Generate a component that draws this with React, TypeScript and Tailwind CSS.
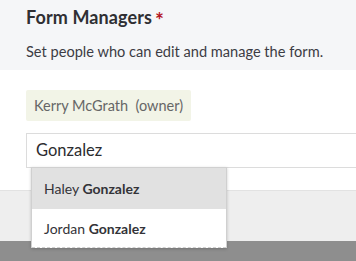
import React from "react";

export default function App() {
  return (
    <div className="w-[356px] h-[261px] overflow-hidden bg-white flex flex-col font-['Lato',sans-serif]">
      <div className="h-[70px] shrink-0 bg-[#f5f6f8] pl-[26px] pt-[5px]">
        <div className="flex items-start text-[18px] leading-[24px] font-bold text-[#2f2f33] tracking-[0.1px]">
          Form Managers
          <span className="ml-[3px] mt-[3px] text-[#b3131f] text-[21px] leading-[24px]">*</span>
        </div>
        <div className="mt-[10px] text-[14.6px] leading-[20px] text-[#3c3c44]">
          Set people who can edit and manage the form.
        </div>
      </div>
      <div className="h-[120px] shrink-0 pl-[26px] pt-[20px]">
        <div className="inline-flex h-[31px] items-center bg-[#f2f4e7] rounded-[2px] px-[8px] text-[14.5px] text-[#666666]">
          Kerry McGrath&nbsp;&nbsp;(owner)
        </div>
        <div className="relative mt-[12px] w-[340px]">
          <div className="h-[35px] border border-[#dcdcdc] flex items-center pl-[9px] text-[16.5px] text-[#2c2c30]">
            Gonzalez
          </div>
          <div className="absolute left-[5px] top-[34px] w-[196px] bg-white border border-[#d0d0d0] border-b-0 shadow-[0_1px_3px_rgba(0,0,0,0.2)] z-10">
            <div className="h-[41px] flex items-center pl-[12px] bg-[#e1e1e1] text-[14px] text-[#333338]">
              Haley&nbsp;<span className="font-bold">Gonzalez</span>
            </div>
            <div className="h-[39px] flex items-center pl-[12px] bg-white text-[14px] text-[#333338] border-b border-dashed border-[#cfcfcf]">
              Jordan&nbsp;<span className="font-bold">Gonzalez</span>
            </div>
          </div>
        </div>
      </div>
      <div className="h-[51px] shrink-0 bg-[#eeeeee] border-t border-[#e2e2e2]" />
      <div className="flex-1 bg-[#8e8e8e]" />
    </div>
  );
}
